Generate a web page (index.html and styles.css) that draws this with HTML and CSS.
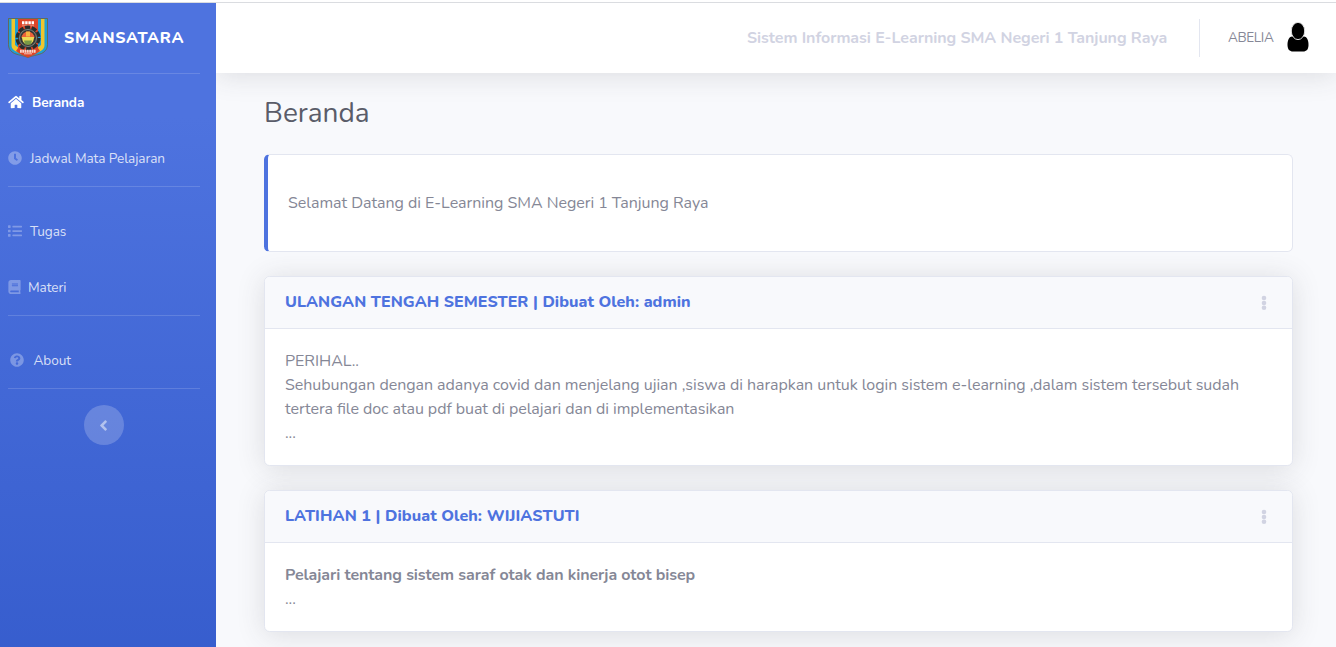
FILE: index.html
```html
<!DOCTYPE html>
<html lang="id">
<head>
<meta charset="utf-8">
<title>Beranda</title>
<link rel="stylesheet" href="styles.css">
</head>
<body>
<div class="wrapper">
  <nav class="sidebar">
    <a class="brand">
      <svg class="brand-logo" viewBox="0 0 40 40">
        <path d="M.5 .5h39v26c0 4-2 7-6 9-5 2-9 2-13.500 4C15.500 37.500 11.500 37.500 6.500 35.500c-4-2-6-5-6-9z" fill="#1f9fd6" stroke="#6a6440" stroke-width=".8"/>
        <path d="M3.500 1h3.500v26l9 7 4 3 4-3 9-7V1h3.500v26c0 4-3 6-7 7.500-4 1-7 2-9.500 4-2.500-2-5.500-3-9.500-4-4-1.500-7-3.500-7-7.500z" fill="#f0c62c"/>
        <path d="M10 1h20v29l2 3-5 3.500-7 3-7-3L8 33l2-3z" fill="#dc4528"/>
        <path d="M14 4.800h12" stroke="#fff" stroke-width="3" stroke-dasharray="2.400 .8"/>
        <path d="M14 7.800h12" stroke="#f3a492" stroke-width=".8"/>
        <circle cx="20" cy="20" r="10.500" fill="none" stroke="#292c2b" stroke-width="4" stroke-dasharray="5 1.600"/>
        <circle cx="20" cy="20" r="9.800" fill="#333735"/>
        <circle cx="20" cy="20" r="8.500" fill="none" stroke="#858b86" stroke-width=".9"/>
        <path d="M13.500 20a6.500 6.500 0 0 1 13 0z" fill="#ec6238"/>
        <path d="M14 19h12c0 4-2 7.500-6 7.500s-6-3.500-6-7.500z" fill="#edda55"/>
        <path d="M16 22.500h8l-1 4h-6z" fill="#789a46"/>
        <path d="M18 13.500h4v5h-4z" fill="#f5b440"/>
        <path d="M12 33.200h16" stroke="#f7d7cc" stroke-width="3" stroke-dasharray="1.800 .5"/>
        <path d="M16 35.800h8" stroke="#f5c3b7" stroke-width="1"/>
      </svg>
      <span class="brand-text">SMANSATARA</span>
    </a>
    <hr class="divider">
    <a class="nav-link active">
      <svg class="icon home" viewBox="0 0 576 512"><path d="M280.370 148.260L96 300.110V464a16 16 0 0 0 16 16l112.060-.29a16 16 0 0 0 15.920-16V368a16 16 0 0 1 16-16h64a16 16 0 0 1 16 16v95.640a16 16 0 0 0 16 16.050L464 480a16 16 0 0 0 16-16V300L295.670 148.260a12.190 12.190 0 0 0-15.300 0zM571.600 251.470L488 182.560V44.050a12 12 0 0 0-12-12h-56a12 12 0 0 0-12 12v72.610L318.470 43a48 48 0 0 0-61 0L4.340 251.470a12 12 0 0 0-1.600 16.900l25.500 31A12 12 0 0 0 45.150 301l235.220-193.740a12.190 12.190 0 0 1 15.300 0L530.900 301a12 12 0 0 0 16.900-1.600l25.500-31a12 12 0 0 0-1.700-16.930z"/></svg>
      <span class="label-beranda">Beranda</span>
    </a>
    <a class="nav-link">
      <svg class="icon clock" viewBox="0 0 512 512"><path d="M256 8C119 8 8 119 8 256s111 248 248 248 248-111 248-248S393 8 256 8zm57.100 350.100L224.900 294c-3.100-2.300-4.900-5.900-4.900-9.700V116c0-6.600 5.400-12 12-12h48c6.600 0 12 5.400 12 12v137.700l63.500 46.200c5.400 3.900 6.500 11.400 2.600 16.800l-28.200 38.800c-3.900 5.300-11.400 6.500-16.800 2.600z"/></svg>
      <span class="label-jadwal">Jadwal Mata Pelajaran</span>
    </a>
    <hr class="divider spaced">
    <a class="nav-link">
      <svg class="icon list" viewBox="0 0 512 512"><path d="M80 368H16a16 16 0 0 0-16 16v64a16 16 0 0 0 16 16h64a16 16 0 0 0 16-16v-64a16 16 0 0 0-16-16zm0-320H16A16 16 0 0 0 0 64v64a16 16 0 0 0 16 16h64a16 16 0 0 0 16-16V64a16 16 0 0 0-16-16zm0 160H16a16 16 0 0 0-16 16v64a16 16 0 0 0 16 16h64a16 16 0 0 0 16-16v-64a16 16 0 0 0-16-16zm416 176H176a16 16 0 0 0-16 16v32a16 16 0 0 0 16 16h320a16 16 0 0 0 16-16v-32a16 16 0 0 0-16-16zm0-320H176a16 16 0 0 0-16 16v32a16 16 0 0 0 16 16h320a16 16 0 0 0 16-16V80a16 16 0 0 0-16-16zm0 160H176a16 16 0 0 0-16 16v32a16 16 0 0 0 16 16h320a16 16 0 0 0 16-16v-32a16 16 0 0 0-16-16z"/></svg>
      <span class="label-tugas">Tugas</span>
    </a>
    <a class="nav-link">
      <svg class="icon book" viewBox="0 0 448 512"><path d="M448 360V24c0-13.300-10.700-24-24-24H96C43 0 0 43 0 96v320c0 53 43 96 96 96h328c13.300 0 24-10.700 24-24v-16c0-7.500-3.500-14.300-8.900-18.700-4.200-15.400-4.200-59.300 0-74.700 5.400-4.300 8.900-11.100 8.900-18.600zM128 134c0-3.300 2.700-6 6-6h212c3.300 0 6 2.700 6 6v20c0 3.300-2.700 6-6 6H134c-3.300 0-6-2.700-6-6v-20zm0 64c0-3.300 2.700-6 6-6h212c3.300 0 6 2.700 6 6v20c0 3.300-2.700 6-6 6H134c-3.300 0-6-2.700-6-6v-20zm253.400 250H96c-17.700 0-32-14.300-32-32 0-17.600 14.400-32 32-32h285.400c-1.900 17.100-1.900 46.900 0 64z"/></svg>
      <span class="label-materi">Materi</span>
    </a>
    <hr class="divider spaced">
    <a class="nav-link about">
      <svg class="icon question" viewBox="0 0 512 512"><path d="M504 256c0 137-111 248-248 248S8 393 8 256 119 8 256 8s248 111 248 248zM262.700 90c-54.500 0-89.300 23-116.500 63.800-3.500 5.300-2.400 12.400 2.700 16.300l34.700 26.300c5.200 3.900 12.600 3 16.700-2.100 17.900-22.700 30.100-35.800 57.300-35.800 20.400 0 45.700 13.100 45.700 33 0 15-12.400 22.700-32.500 34C247.100 238.500 216 254.900 216 296v4c0 6.600 5.400 12 12 12h56c6.600 0 12-5.400 12-12v-1.300c0-28.500 83.200-29.600 83.200-106.700 0-58-60.200-102-116.500-102zM256 338c-25.400 0-46 20.600-46 46s20.600 46 46 46 46-20.600 46-46-20.600-46-46-46z"/></svg>
      <span class="label-about">About</span>
    </a>
    <hr class="divider spaced">
    <button class="toggle" type="button">
      <svg viewBox="0 0 256 512"><path d="M31.700 239l136-136c9.400-9.400 24.600-9.400 33.900 0l22.600 22.600c9.400 9.400 9.400 24.600 0 33.900L127.900 256l96.400 96.400c9.400 9.400 9.400 24.600 0 33.900L201.700 409c-9.400 9.400-24.600 9.400-33.900 0l-136-136c-9.500-9.400-9.500-24.600-.1-34z"/></svg>
    </button>
  </nav>
  <div class="content">
    <header class="topbar">
      <span class="system-name">Sistem Informasi E-Learning SMA Negeri 1 Tanjung Raya</span>
      <span class="topbar-divider"></span>
      <span class="user-name">ABELIA</span>
      <svg class="avatar" viewBox="0 0 24 32"><path d="M6 14.500C3.500 14.500 1.500 18 1.500 22.500c0 5 2 7 5.500 7h10c3.500 0 5.500-2 5.500-7 0-4.500-2-8-4.500-8z"/><ellipse class="avatar-head" cx="12" cy="9" rx="6.700" ry="8.600"/></svg>
    </header>
    <main class="main">
      <h1 class="title">Beranda</h1>
      <section class="welcome"><span class="welcome-text">Selamat Datang di E-Learning SMA Negeri 1 Tanjung Raya</span></section>
      <section class="card">
        <div class="card-header">
          <h2 class="card-title">ULANGAN TENGAH SEMESTER | Dibuat Oleh: admin</h2>
          <svg class="kebab" viewBox="0 0 6 16"><circle cx="3" cy="3" r="2.300"/><circle cx="3" cy="8" r="2.300"/><circle cx="3" cy="12.800" r="2.300"/></svg>
        </div>
        <div class="card-body">
          <div>PERIHAL..</div>
          <div>Sehubungan dengan adanya covid dan menjelang ujian ,siswa di harapkan untuk login sistem e-learning ,dalam sistem tersebut sudah</div>
          <div class="line-second">tertera file doc atau pdf buat di pelajari dan di implementasikan</div>
          <div>...</div>
        </div>
      </section>
      <section class="card">
        <div class="card-header">
          <h2 class="card-title title-exercise">LATIHAN 1 | Dibuat Oleh: WIJIASTUTI</h2>
          <svg class="kebab" viewBox="0 0 6 16"><circle cx="3" cy="3" r="2.300"/><circle cx="3" cy="8" r="2.300"/><circle cx="3" cy="12.800" r="2.300"/></svg>
        </div>
        <div class="card-body">
          <div class="line-bold">Pelajari tentang sistem saraf otak dan kinerja otot bisep</div>
          <div>...</div>
        </div>
      </section>
    </main>
  </div>
</div>
</body>
</html>
```
FILE: styles.css
```css
* { box-sizing: border-box; }
body {
  margin: 0;
  height: 647px;
  overflow: hidden;
  padding-top: 2px;
  background: #fff;
  color: #858796;
  font: 16px/24px Nunito, Lato, "Open Sans", sans-serif;
  white-space: nowrap;
}
.wrapper { display: flex; height: 645px; border-top: 1px solid #dadce0; }
.sidebar {
  flex: 0 0 216px;
  padding: 0 16px 0 8px;
  background: linear-gradient(180deg, #4e73df 113px, #224abe 1130px);
}
.brand { display: flex; align-items: center; height: 70px; color: #fff; }
.brand-logo { width: 40px; height: 40px; margin-right: 16px; }
.brand-text { font-size: 16px; font-weight: 800; letter-spacing: .7px; }
.divider { height: 1px; margin: 0; border: 0; background: rgba(255,255,255,.15); }
.divider.spaced { margin-bottom: 16px; }
.nav-link { display: flex; align-items: center; height: 56px; color: rgba(255,255,255,.8); font-size: 13.6px; }
.nav-link span { padding-top: 2px; letter-spacing: -.05px; }
.nav-link .label-beranda { letter-spacing: -.1px; }
.nav-link .label-jadwal { letter-spacing: -.09px; }
.nav-link .label-about { letter-spacing: -.08px; }
.nav-link.active { color: #fff; font-weight: 700; }
.icon { flex: none; height: 14px; fill: rgba(255,255,255,.3); }
.active .icon { fill: #fff; }
.home { width: 16px; margin-right: 8px; }
.clock, .list { width: 14px; margin-right: 8px; }
.book { width: 13px; margin-right: 7px; }
.about { padding-left: 2px; }
.question { width: 14px; margin-right: 9.5px; }
.toggle {
  display: flex; align-items: center; justify-content: center;
  width: 40px; height: 40px; margin: 0 auto; padding: 0;
  border: 0; border-radius: 50%; background: rgba(255,255,255,.2);
}
.toggle svg { width: 9px; height: 17px; margin-right: 1px; fill: rgba(255,255,255,.5); }
.content { flex: 1; min-width: 0; background: #f8f9fc; overflow: hidden; }
.topbar {
  position: relative;
  display: flex; align-items: center; justify-content: flex-end;
  height: 70px; padding-right: 26px; background: #fff;
  box-shadow: 0 2.4px 28px rgba(58,59,69,.15);
}
.system-name { width: 420px; color: #d1d3e2; font-weight: 700; letter-spacing: -.05px; }
.topbar-divider { width: 1px; height: 38px; margin: 0 28px 0 32px; background: #e3e6f0; }
.user-name { width: 46px; font-size: 13.6px; letter-spacing: -.4px; }
.avatar { width: 24px; height: 32px; margin-left: 12px; }
.avatar-head { stroke: #ddd; stroke-width: 1px; }
.main { padding: 24px 43px 0 48px; }
.title { margin: 0 0 24px; color: #5a5c69; font-size: 28px; font-weight: 400; line-height: 33px; }
.welcome {
  display: flex; align-items: center; height: 98px; margin-bottom: 24px; padding-left: 20px;
  background: #fff; border: 1px solid #e3e6f0; border-left: 4px solid #4e73df; border-radius: 5.600px;
}
.welcome-text { letter-spacing: -.035px; }
.card {
  margin-bottom: 24px; background: #fff; border: 1px solid #e3e6f0; border-radius: 5.600px;
  box-shadow: 0 2.4px 28px rgba(58,59,69,.15);
}
.card-header {
  display: flex; align-items: center; justify-content: space-between;
  height: 52px; padding: 0 25.5px 0 20px;
  background: #f8f9fc; border-bottom: 1px solid #e3e6f0; border-radius: 5px 5px 0 0;
}
.card-title { margin: 0; color: #4e73df; font-size: 16px; font-weight: 800; line-height: 19px; letter-spacing: .045px; }
.title-exercise { letter-spacing: .08px; }
.kebab { width: 6px; height: 16px; fill: #d1d3e2; }
.card-body { padding: 20px; letter-spacing: -.043px; font-feature-settings: "liga" 1; }
.line-second { letter-spacing: -.06px; }
.line-bold { font-weight: 700; letter-spacing: -.08px; }
```
